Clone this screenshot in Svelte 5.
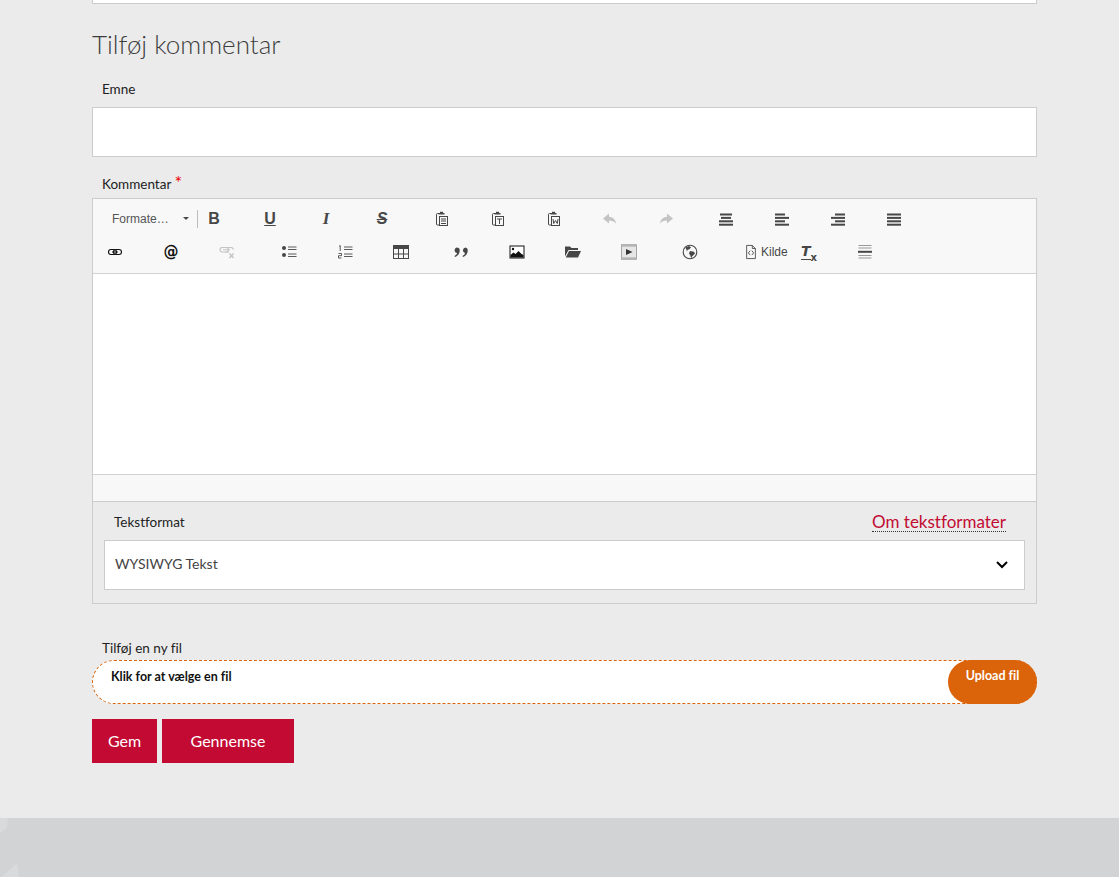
<script>
  const stroke = 'fill="none" stroke="currentColor"';
  const paste = (inner) => `<path d="M5 2.500H3.500a1 1 0 0 0-1 1v9.500a1 1 0 0 0 1 1H5" ${stroke}/><path d="M4.500 3.500V2h1.500V.8h3V2h1.500v1.500z" fill="currentColor"/><rect x="5.500" y="5.500" width="8" height="9" ${stroke}/>${inner}`;
  const bars = (rows) => rows.map(([x, w], i) => `<rect x="${x}" y="${2.5 + i * 3.4}" width="${w}" height="2" fill="currentColor"/>`).join("");

  const icons = {
    pasteDoc: paste(`<path d="M7 8h5M7 10h5M7 12.500h5" ${stroke}/>`),
    pasteT: paste(`<path d="M7 8h5M9.500 8v5" ${stroke}/>`),
    pasteW: paste(`<path d="M7 8l.7 4.500L9.500 9.500l1.800 3L12 8" ${stroke}/>`),
    undo: `<path d="M7 2.500L1 7.500l6 5V9.500c2.800 0 5 .8 7 3-.4-3.800-2.800-6.300-7-6.800z" fill="currentColor"/>`,
    redo: `<path d="M9 2.500l6 5-6 5V9.500c-2.800 0-5 .8-7 3 .4-3.800 2.800-6.300 7-6.800z" fill="currentColor"/>`,
    center: bars([[2, 12], [3, 10], [1, 14], [1, 14]]),
    left: bars([[1, 10], [1, 14], [1, 10], [1, 14]]),
    right: bars([[5, 10], [1, 14], [5, 10], [1, 14]]),
    justify: bars([[1, 14], [1, 14], [1, 14], [1, 14]]),
    link: `<rect x="1.500" y="5.500" width="8" height="5" rx="2.500" fill="none" stroke="#111" stroke-width="1.100"/><rect x="6.500" y="5.500" width="8" height="5" rx="2.500" fill="none" stroke="#111" stroke-width="1.100"/><path d="M5 8h6" stroke="#111"/>`,
    unlink: `<rect x="1" y="3.500" width="8.500" height="4.500" rx="2.200" fill="none" stroke="currentColor" stroke-width="1.100"/><path d="M7 3.500h5a2.300 2.300 0 0 1 2.300 2.300M6 8h4M4 5.800h7" ${stroke} stroke-width="1.100"/><path d="M10.500 9.500l4 4.500M14.500 9.500l-4 4.500" ${stroke} stroke-width="1.400"/>`,
    bullets: `<circle cx="3" cy="4" r="2" fill="currentColor"/><circle cx="3" cy="11" r="2" fill="currentColor"/><path d="M7 3h8.500M7 5.500h8.500M7 10h8.500M7 12.500h8.500" ${stroke} stroke-width=".9"/>`,
    numbers: `<path d="M3.200 1.500v5.500M2 2.500l1.200-1M1.500 9.500h3v2.200h-3v2.300h3" ${stroke} stroke-width=".9"/><path d="M7 3h8.500M7 5.500h8.500M7 10h8.500M7 12.500h8.500" ${stroke} stroke-width=".9"/>`,
    table: `<rect x=".5" y="1.500" width="15" height="13" ${stroke}/><rect x="0" y="1" width="16" height="4" fill="currentColor"/><path d="M0 10h16M5.500 5v10M10.500 5v10" ${stroke}/>`,
    quote: `<path d="M3.700 3.500a3 3 0 0 1 3 3.200c0 3-2 5.300-4.700 6.300l-.5-1c1.400-.7 2.300-1.800 2.500-3A2.800 2.800 0 0 1 3.700 3.500zM11.700 3.500a3 3 0 0 1 3 3.200c0 3-2 5.300-4.700 6.300l-.5-1c1.400-.7 2.300-1.800 2.500-3a2.800 2.800 0 0 1 .7-5.500z" fill="currentColor"/>`,
    image: `<rect x="1" y="2" width="14" height="12" fill="#fff" stroke="#111"/><circle cx="4" cy="5" r="1.200" fill="#111"/><path d="M1.500 13.500v-2.500l3-2.500 2 1.500 3-3 3 3 2 1v2.500z" fill="#111"/>`,
    folder: `<path d="M0 2.500h5L6.500 4H13v2H3.500L0 12.500z" fill="currentColor"/><path d="M4 7h12l-3 6.500H.8z" fill="currentColor"/>`,
    film: `<rect x="0" y="0" width="16" height="16" fill="#a5a5a5"/><path d="M.5 1h15M.5 15h15" stroke="#f0f0f0" stroke-width=".8" stroke-dasharray="1 1"/><rect x="1" y="2.500" width="14" height="11" fill="#e6e6e6"/><path d="M5 5l6.500 3L5 11z" fill="#333"/>`,
    globe: `<circle cx="8" cy="8" r="6.800" ${stroke} stroke-width="1.100"/><path d="M3.500 3.500L7 2l2 1.200-1.500 2-2 .6-.4 1.800zM8 7l4 .8 1 1.700-3 3-.8 2-1-3.200L7 9.500z" fill="currentColor"/>`,
    source: `<path d="M3 .5h6.500L13 4v11.500H3z" ${stroke}/><path d="M9.500.5V4H13" ${stroke}/><path d="M7 6.500L5 9l2 2.500M9 6.500l2 2.500-2 2.500" ${stroke}/>`,
    hr: `<path d="M1.500 1.500h13M1.500 4h13M1.500 11.500h13M1.500 14h13" fill="none" stroke="#999"/><rect x="1" y="6.800" width="14" height="2" fill="currentColor"/>`
  };

  const row1 = [
    { text: "B", cls: "bold" },
    { text: "U", cls: "under" },
    { text: "I", cls: "ital" },
    { text: "S", cls: "strike" },
    { icon: "pasteDoc", group: 4 },
    { icon: "pasteT" },
    { icon: "pasteW" },
    { icon: "undo", off: true },
    { icon: "redo", off: true },
    { icon: "center", group: 4 },
    { icon: "left" },
    { icon: "right" },
    { icon: "justify" }
  ];

  const row2 = [
    { icon: "link" },
    { text: "@", cls: "at" },
    { icon: "unlink", off: true },
    { icon: "bullets", group: 6 },
    { icon: "numbers" },
    { icon: "table" },
    { icon: "quote", group: 4 },
    { icon: "image" },
    { icon: "folder" },
    { icon: "film" },
    { icon: "globe", group: 5 }
  ];
</script>

<div class="page">
  <main class="content">
    <div class="prev-box"></div>
    <h2>Tilføj kommentar</h2>

    <label class="field-label" for="emne">Emne</label>
    <input id="emne" class="text-input" type="text" />

    <div class="field-label kommentar">Kommentar <span class="req">*</span></div>
    <div class="editor">
      <div class="toolbar">
        <div class="row">
          <div class="combo">
            <span>Formate…</span>
            <i class="caret"></i>
          </div>
          {#each row1 as b}
            <span class="btn" class:off={b.off} style={b.group ? `margin-left: ${b.group}px` : ""}>
              {#if b.text}
                <span class={b.cls}>{b.text}</span>
              {:else}
                <svg width="16" height="16" viewBox="0 0 16 16">{@html icons[b.icon]}</svg>
              {/if}
            </span>
          {/each}
        </div>
        <div class="row second">
          {#each row2 as b}
            <span class="btn" class:off={b.off} style={b.group ? `margin-left: ${b.group}px` : ""}>
              {#if b.text}
                <span class={b.cls}>{b.text}</span>
              {:else}
                <svg width="16" height="16" viewBox="0 0 16 16">{@html icons[b.icon]}</svg>
              {/if}
            </span>
          {/each}
          <span class="source">
            <svg width="14" height="16" viewBox="0 0 16 16">{@html icons.source}</svg>
            <span>Kilde</span>
          </span>
          <span class="btn clear"><span class="tx"><span class="tx-t">T</span><span class="tx-x">x</span></span></span>
          <span class="btn">
            <svg width="16" height="16" viewBox="0 0 16 16">{@html icons.hr}</svg>
          </span>
        </div>
      </div>
      <div class="body"></div>
      <div class="statusbar"></div>
      <div class="format">
        <div class="format-head">
          <span class="format-label">Tekstformat</span>
          <span class="about">Om tekstformater</span>
        </div>
        <div class="select">
          <span class="select-value">WYSIWYG Tekst</span>
          <svg width="14" height="10" viewBox="0 0 14 10"><path d="M2 2l5 5 5-5" fill="none" stroke="#000" stroke-width="2"/></svg>
        </div>
      </div>
    </div>

    <div class="field-label upload-label">Tilføj en ny fil</div>
    <div class="upload">
      <span class="upload-hint">Klik for at vælge en fil</span>
      <span class="upload-btn">Upload fil</span>
    </div>

    <div class="actions">
      <span class="action gem">Gem</span>
      <span class="action browse">Gennemse</span>
    </div>
  </main>

  <footer>
    <svg class="shapes" width="40" height="59" viewBox="0 0 40 59">
      <path d="M0 0h8l-1 10-7 5z" fill="#d9dadb"/>
      <path d="M17 45l-15 14h17z" fill="#d9dadb"/>
    </svg>
  </footer>
</div>

<style>
  :global(body) {
    background: #ebebeb;
  }

  .page {
    font-family: Lato, "Open Sans", sans-serif;
    font-variant-ligatures: none;
    color: #222222;
    min-height: 877px;
    display: flex;
    flex-direction: column;
    overflow: hidden;
  }

  .content {
    width: 945px;
    margin-left: 92px;
    height: 818px;
    box-sizing: border-box;
  }

  .prev-box {
    height: 3px;
    background: #ffffff;
    border: 1px solid #cccccc;
    border-top: 0;
  }

  h2 {
    margin: 25px 0 0;
    font-size: 26px;
    line-height: 30px;
    font-weight: 300;
    color: #3d3d3d;
  }

  .field-label {
    display: block;
    margin: 21px 0 0 10px;
    font-size: 13.5px;
    line-height: 18px;
    color: #222222;
  }

  .text-input {
    display: block;
    width: 100%;
    height: 50px;
    box-sizing: border-box;
    margin-top: 9px;
    background: #ffffff;
    border: 1px solid #cccccc;
    border-radius: 0;
  }

  .kommentar {
    margin-top: 18px;
    height: 23px;
  }

  .req {
    color: #ee0000;
    font-size: 18px;
    line-height: 14px;
  }

  .editor {
    border: 1px solid #cccccc;
    height: 406px;
    box-sizing: border-box;
  }

  .toolbar {
    height: 75px;
    box-sizing: border-box;
    background: #f8f8f8;
    border-bottom: 1px solid #d1d1d1;
    padding: 3px 0 0 8px;
  }

  .row {
    display: flex;
    align-items: center;
    height: 33px;
  }

  .combo {
    width: 97px;
    height: 18px;
    display: flex;
    align-items: center;
    justify-content: space-between;
    box-sizing: border-box;
    padding: 0 8px 0 11px;
    border-right: 1px solid #bcbcbc;
    margin-right: 2px;
    font-family: "Liberation Sans", sans-serif;
    font-size: 12px;
    color: #555555;
  }

  .caret {
    border: 3px solid transparent;
    border-top: 3px solid #474747;
    border-bottom: 0;
  }

  .btn {
    width: 28px;
    height: 28px;
    flex: none;
    margin-right: 28px;
    display: flex;
    align-items: center;
    justify-content: center;
    color: #474747;
  }

  .btn.off {
    color: #c4c4c4;
  }

  .bold,
  .under,
  .strike {
    font-family: "Liberation Sans", sans-serif;
    font-size: 16px;
    font-weight: 700;
    line-height: 16px;
  }

  .under {
    text-decoration: underline;
  }

  .ital {
    font-family: "Liberation Serif", serif;
    font-size: 17px;
    font-weight: 700;
    font-style: italic;
    line-height: 16px;
  }

  .strike {
    text-decoration: line-through;
    font-style: italic;
  }

  .at {
    font-family: "DejaVu Sans", sans-serif;
    font-size: 15px;
    font-weight: 700;
    color: #111111;
  }

  .source {
    display: flex;
    align-items: center;
    gap: 3px;
    width: 46px;
    margin-left: 12px;
    flex: none;
    color: #474747;
    font-family: "Liberation Sans", sans-serif;
    font-size: 12px;
  }

  .btn.clear {
    margin-left: 5px;
  }

  .tx {
    display: flex;
    align-items: flex-end;
    font-family: "DejaVu Sans", sans-serif;
    font-weight: 700;
    color: #474747;
  }

  .tx-t {
    font-size: 14px;
    font-style: italic;
    line-height: 15px;
    border-bottom: 1px solid #474747;
  }

  .tx-x {
    font-size: 10px;
    line-height: 10px;
    margin-bottom: -3px;
  }

  .body {
    height: 200px;
    background: #ffffff;
    border-bottom: 1px solid #d1d1d1;
  }

  .statusbar {
    height: 26px;
    background: #f8f8f8;
    border-bottom: 1px solid #cccccc;
  }

  .format {
    padding: 0 11px;
  }

  .format-head {
    height: 38px;
    display: flex;
    justify-content: space-between;
    align-items: flex-start;
    padding: 10px 19px 0 10px;
    box-sizing: border-box;
  }

  .format-label {
    font-size: 13.5px;
    line-height: 20px;
  }

  .about {
    font-size: 17px;
    line-height: 19px;
    color: #c20a33;
    border-bottom: 1px dotted #333333;
  }

  .select {
    height: 50px;
    box-sizing: border-box;
    background: #ffffff;
    border: 1px solid #cccccc;
    display: flex;
    align-items: center;
    justify-content: space-between;
    padding: 0 15px 0 10px;
    font-size: 14px;
    color: #444444;
  }

  .select-value {
    margin-bottom: 3px;
  }

  .upload-label {
    margin-top: 35px;
  }

  .upload {
    height: 44px;
    margin-top: 3px;
    box-sizing: border-box;
    background: #ffffff;
    border: 1px dashed #db640a;
    border-radius: 22px;
    position: relative;
    padding: 8px 0 0 18px;
  }

  .upload-hint {
    font-size: 12.5px;
    font-weight: 700;
    line-height: 16px;
    color: #111111;
    display: block;
  }

  .upload-btn {
    position: absolute;
    top: -1px;
    right: -1px;
    width: 89px;
    height: 44px;
    border-radius: 22px;
    background: #db640a;
    color: #ffffff;
    font-size: 12.5px;
    font-weight: 700;
    line-height: 32px;
    text-align: center;
  }

  .actions {
    display: flex;
    gap: 5px;
    margin-top: 15px;
  }

  .action {
    height: 44px;
    background: #c20a33;
    color: #ffffff;
    font-size: 16px;
    line-height: 44px;
    text-align: center;
  }

  .gem {
    width: 65px;
  }

  .browse {
    width: 132px;
  }

  footer {
    height: 59px;
    background: #d2d3d5;
    position: relative;
  }

  .shapes {
    position: absolute;
    left: 0;
    top: 0;
  }
</style>
